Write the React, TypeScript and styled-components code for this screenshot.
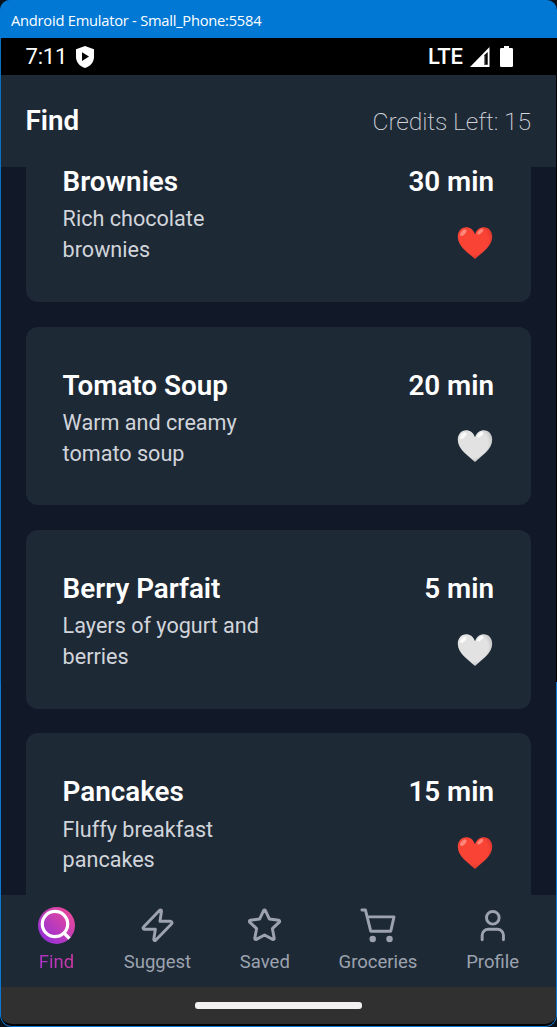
import React from 'react';
import styled, { createGlobalStyle } from 'styled-components';

const GlobalStyle = createGlobalStyle`
  * { box-sizing: border-box; }
  body { margin: 0; background: #0b1118; }
  svg { display: block; flex: none; }
`;

const Window = styled.div`
  width: 557px;
  height: 1027px;
  display: flex;
  flex-direction: column;
  overflow: hidden;
  border-radius: 10px 10px 12px 12px;
  background: linear-gradient(to right, #0a70c4 50%, #000 50%) top / 100% 682px no-repeat, #0a78d4;
  padding: 0 1px 1px;
  font-family: Roboto, sans-serif;
`;

const TitleBar = styled.div`
  flex: none;
  height: 38px;
  margin: 0 -1px;
  padding: 1px 11px 0;
  display: flex;
  align-items: center;
  background: #0078d4;
  color: #fff;
  font: 400 14.7px 'Open Sans', 'Noto Sans', sans-serif;
  letter-spacing: -0.24px;
  white-space: nowrap;
`;

const StatusBar = styled.div`
  flex: none;
  height: 37px;
  padding: 0 43px 0 24.5px;
  display: flex;
  align-items: center;
  justify-content: space-between;
  background: #000;
  color: #fff;
  font-size: 22px;
`;

const StatusGroup = styled.div<{ $gap: number }>`
  display: flex;
  align-items: center;
  gap: ${(p) => p.$gap}px;
`;

const Clock = styled.span`
  letter-spacing: -0.2px;
`;

const Network = styled.span`
  margin-right: -3px;
  font-weight: 500;
`;

const Header = styled.header`
  flex: none;
  height: 92px;
  padding: 0 25px 0 24.5px;
  display: flex;
  align-items: center;
  justify-content: space-between;
  background: #1e2936;
`;

const ScreenTitle = styled.h1`
  margin: 0 0 1px;
  color: #fff;
  font-size: 27.8px;
  font-weight: 600;
`;

const Credits = styled.span`
  color: #d1d5db;
  font-size: 24.7px;
  font-weight: 200;
  letter-spacing: -0.14px;
`;

const List = styled.main`
  flex: none;
  height: 728px;
  padding: 0 25px 0 24.6px;
  overflow: hidden;
  background: #111827;
  display: flex;
  flex-direction: column;
  gap: 24.7px;
`;

const Card = styled.article`
  flex: none;
  height: 178.7px;
  padding: 37px;
  display: flex;
  justify-content: space-between;
  border-radius: 12px;
  background: #1e2936;

  &:first-child { margin-top: -43.7px; }
`;

const CardText = styled.div`
  width: 210px;
`;

const CardTitle = styled.h2`
  margin: 0;
  color: #fff;
  font-size: 27.8px;
  line-height: 43.2px;
  font-weight: 600;
  white-space: nowrap;
`;

const Description = styled.p`
  margin: 0;
  padding-top: 0.9px;
  color: #d1d5db;
  font-size: 21.6px;
  line-height: 30.9px;
`;

const CardSide = styled.div`
  display: flex;
  flex-direction: column;
  align-items: flex-end;
  gap: 23.6px;

  svg { margin-right: 1px; }
`;

const TabBar = styled.nav`
  flex: none;
  height: 92px;
  padding: 12px 37px 0;
  display: flex;
  justify-content: space-between;
  background: #1e2936;
`;

const Tab = styled.div`
  display: flex;
  flex-direction: column;
  align-items: center;
  color: #9ca3af;
`;

const TabIcon = styled.div`
  height: 37px;
  display: flex;
  align-items: center;
`;

const TabLabel = styled.span<{ $active?: boolean }>`
  margin-top: 6px;
  font-size: 18.5px;
  line-height: 24px;
  ${(p) =>
    p.$active &&
    `background: linear-gradient(90deg, #a832c8, #d03aa4);
     background-clip: text;
     -webkit-background-clip: text;
     color: transparent;`}
`;

const SystemBar = styled.div`
  flex: none;
  height: 39px;
  display: flex;
  align-items: center;
  justify-content: center;
  background: #303030;
  border-bottom: 2px solid #000;
  border-radius: 0 0 11px 11px;
`;

const HomeHandle = styled.div`
  width: 167px;
  height: 6.500px;
  border-radius: 3px;
  background: #f2f0f1;
`;

const ShieldIcon = () => (
  <svg width="18" height="22" viewBox="0 0 18 22">
    <path d="M9 0 18 3.3V11c0 5-3.6 9.4-9 11C3.600 20.400 0 16 0 11V3.300Z" fill="#fff" />
    <path d="M6 6.300v8.600l7-4.300Z" fill="#000" />
  </svg>
);

const SignalIcon = () => (
  <svg width="20" height="20" viewBox="0 0 20 20">
    <path d="M0 20 19.500 0v20Z" fill="#fff" />
    <path d="M14 8.500 17.700 5v12.800H14Z" fill="#000" />
    <path d="M14 8.500h1.300v9.300H14Z" fill="#777" />
  </svg>
);

const BatteryIcon = () => (
  <svg width="13" height="21" viewBox="0 0 13 21">
    <path d="M4 0h5v2h2.700Q13 2 13 3.300v16.400Q13 21 11.700 21H1.300Q0 21 0 19.700V3.300Q0 2 1.300 2H4Z" fill="#fff" />
  </svg>
);

const Heart = ({ liked }: { liked: boolean }) => {
  const id = liked ? 'liked' : 'plain';
  return (
    <svg width="36" height="33" viewBox="0 0 36 33">
      <defs>
        <radialGradient id={id} cx="0.42" cy="0.4" r="0.65">
          <stop offset="0.7" stopColor={liked ? '#f84335' : '#e2e2e2'} />
          <stop offset="1" stopColor={liked ? '#d9342d' : '#bdbdbd'} />
        </radialGradient>
      </defs>
      <path
        d="M18 7.300C16.500 2.700 13 .3 9.200.3 4 .3.800 4.500.8 9.800.8 19.500 11.500 26 18 32 24.500 26 35.200 19.500 35.200 9.800 35.200 4.500 32 .3 26.800.3 23 .3 19.500 2.700 18 7.300Z"
        fill={`url(#${id})`}
      />
      <g fill={liked ? '#ff8779' : '#fafafa'}>
        <ellipse cx="6.300" cy="5.700" rx="4" ry="2.100" transform="rotate(-48 6.300 5.700)" />
        <ellipse cx="23.200" cy="4.700" rx="3.700" ry="1.700" transform="rotate(-42 23.200 4.700)" />
      </g>
    </svg>
  );
};

const FindIcon = () => (
  <svg width="37" height="37" viewBox="0 0 37 37">
    <defs>
      <linearGradient id="find" x1="0" y1="1" x2="1" y2="0">
        <stop offset="0.1" stopColor="#9230d8" />
        <stop offset="0.9" stopColor="#ec4899" />
      </linearGradient>
    </defs>
    <circle cx="18.500" cy="18.500" r="18.500" fill="url(#find)" />
    <g fill="none" stroke="#fff" strokeWidth="3.200">
      <circle cx="17" cy="17" r="12.700" />
      <path d="m25.800 25.800 5.700 5.700" />
    </g>
  </svg>
);

const OutlineIcon = ({ children }: { children: React.ReactNode }) => (
  <svg
    width="37"
    height="37"
    viewBox="0 0 24 24"
    fill="none"
    stroke="currentColor"
    strokeWidth="1.900"
    strokeLinecap="round"
    strokeLinejoin="round"
  >
    {children}
  </svg>
);

const recipes = [
  { name: 'Brownies', lines: ['Rich chocolate', 'brownies'], time: '30 min', liked: true },
  { name: 'Tomato Soup', lines: ['Warm and creamy', 'tomato soup'], time: '20 min', liked: false },
  { name: 'Berry Parfait', lines: ['Layers of yogurt and', 'berries'], time: '5 min', liked: false },
  { name: 'Pancakes', lines: ['Fluffy breakfast', 'pancakes'], time: '15 min', liked: true },
];

const tabs = [
  { label: 'Find', active: true, icon: <FindIcon /> },
  {
    label: 'Suggest',
    icon: (
      <OutlineIcon>
        <path d="M13.400 2.100a.7.7 0 0 1 1.200.6l-1 6.600h7a.9.9 0 0 1 .6 1.500L10.800 21.500a.7.7 0 0 1-1.200-.6l1-6.500H3.500a.8.8 0 0 1-.6-1.400Z" />
      </OutlineIcon>
    ),
  },
  {
    label: 'Saved',
    icon: (
      <OutlineIcon>
        <path d="M11.400 2.300a.7.7 0 0 1 1.200 0L15.200 7.800l6 .8a.7.7 0 0 1 .4 1.200l-4.500 4.200 1.200 6.300a.7.7 0 0 1-1 .7L12 18.200l-5.300 2.800a.7.7 0 0 1-1-.7l1.200-6.300-4.500-4.200a.7.7 0 0 1 .4-1.200l6-.8Z" />
      </OutlineIcon>
    ),
  },
  {
    label: 'Groceries',
    icon: (
      <OutlineIcon>
        <path d="M1.900 2h2.300l3.400 13.700h13l2.100-9.300H5.400" />
        <circle cx="8.900" cy="20.800" r="1.150" fill="currentColor" />
        <circle cx="19.800" cy="20.800" r="1.150" fill="currentColor" />
      </OutlineIcon>
    ),
  },
  {
    label: 'Profile',
    icon: (
      <OutlineIcon>
        <circle cx="12.200" cy="7" r="4.100" />
        <path d="M5.300 21.200v-2.800a4 4 0 0 1 4-4h5.800a4 4 0 0 1 4 4v2.800" />
      </OutlineIcon>
    ),
  },
];

export default function App() {
  return (
    <>
      <GlobalStyle />
      <Window>
        <TitleBar>Android Emulator - Small_Phone:5584</TitleBar>
        <StatusBar>
          <StatusGroup $gap={9}>
            <Clock>7:11</Clock>
            <ShieldIcon />
          </StatusGroup>
          <StatusGroup $gap={10}>
            <Network>LTE</Network>
            <SignalIcon />
            <BatteryIcon />
          </StatusGroup>
        </StatusBar>
        <Header>
          <ScreenTitle>Find</ScreenTitle>
          <Credits>Credits Left: 15</Credits>
        </Header>
        <List>
          {recipes.map((recipe) => (
            <Card key={recipe.name}>
              <CardText>
                <CardTitle>{recipe.name}</CardTitle>
                <Description>
                  {recipe.lines[0]}
                  <br />
                  {recipe.lines[1]}
                </Description>
              </CardText>
              <CardSide>
                <CardTitle as="span">{recipe.time}</CardTitle>
                <Heart liked={recipe.liked} />
              </CardSide>
            </Card>
          ))}
        </List>
        <TabBar>
          {tabs.map((tab) => (
            <Tab key={tab.label}>
              <TabIcon>{tab.icon}</TabIcon>
              <TabLabel $active={tab.active}>{tab.label}</TabLabel>
            </Tab>
          ))}
        </TabBar>
        <SystemBar>
          <HomeHandle />
        </SystemBar>
      </Window>
    </>
  );
}
